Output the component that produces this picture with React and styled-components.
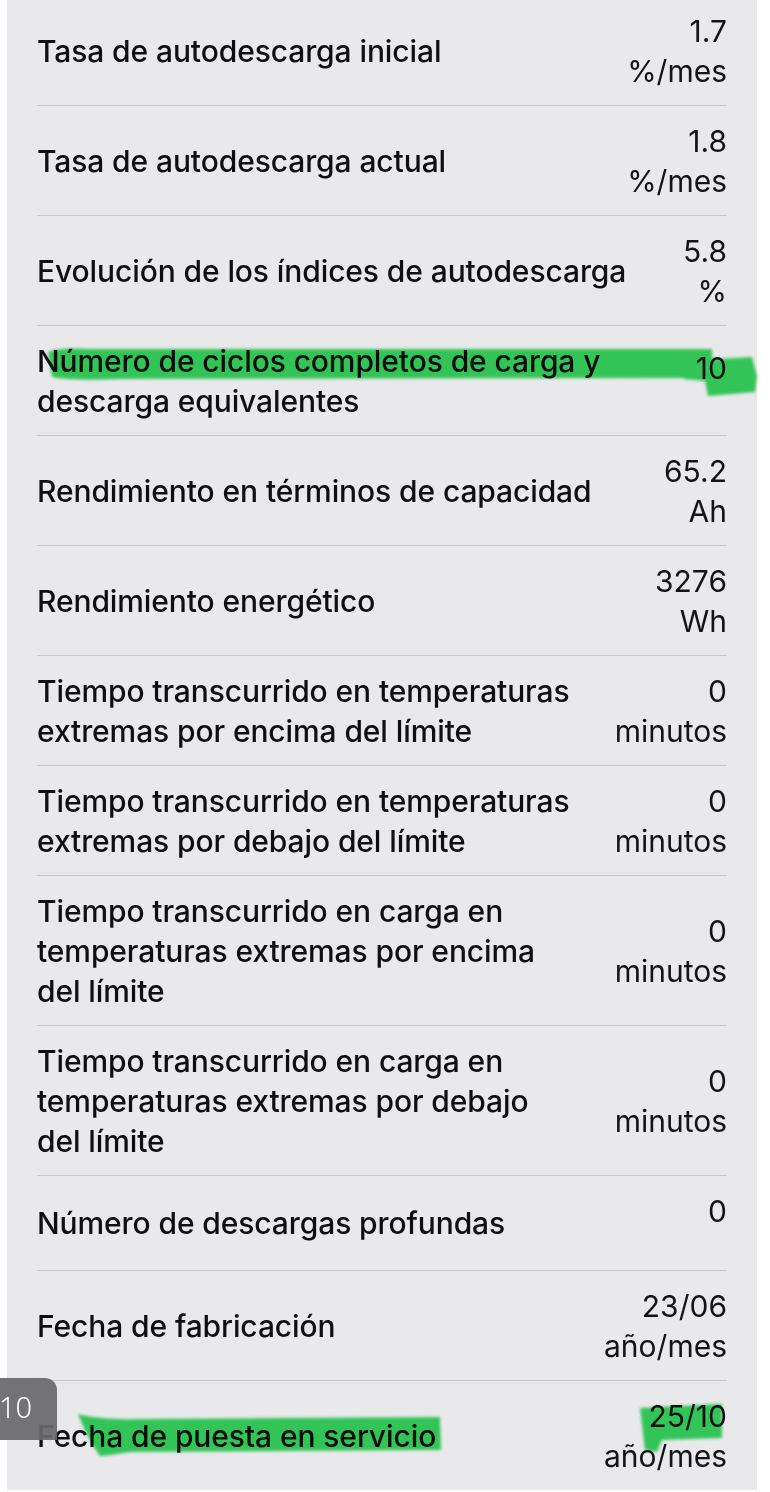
import React from "react"
import styled, { createGlobalStyle } from "styled-components"

const Global = createGlobalStyle`
  html, body {
    margin: 0;
    padding: 0;
    background: #ffffff;
    overflow: hidden;
  }
  body {
    font-family: Inter, "Liberation Sans", sans-serif;
    -webkit-font-smoothing: antialiased;
  }
`

const Page = styled.div`
  position: relative;
  width: 770px;
  height: 1492px;
  overflow: hidden;
  background: #ffffff;
`

const Panel = styled.div`
  margin-left: 7px;
  width: 750px;
  min-height: 1492px;
  background: #e9e9eb;
  padding: 0 30px;
  box-sizing: border-box;
`

const List = styled.ul`
  list-style: none;
  margin: -5px 0 0 0;
  padding: 0;
`

const Row = styled.li`
  display: flex;
  align-items: center;
  gap: 38px;
  padding: 14.5px 0;
  border-top: 1px solid #c7c7cb;
`

const Label = styled.div`
  flex: 1;
  font-size: 30px;
  line-height: 40px;
  font-weight: 500;
  color: #0f0f11;
  letter-spacing: -0.1px;
`

const Value = styled.div`
  display: flex;
  flex-direction: column;
  align-items: flex-end;
  text-align: right;
  font-size: 30px;
  line-height: 40px;
  font-weight: 400;
  color: #141416;
  white-space: nowrap;
`

const Unit = styled.span`
  min-height: 25px;
`

const Marks = styled.svg`
  position: absolute;
  left: 0;
  top: 0;
  width: 770px;
  height: 1492px;
  pointer-events: none;
  mix-blend-mode: multiply;
`

const Badge = styled.div`
  position: absolute;
  left: 0;
  top: 1378px;
  width: 57px;
  height: 62px;
  background: rgba(104, 104, 108, 0.92);
  border-radius: 0 12px 0 0;
  color: #ffffff;
  font-family: "Noto Sans", Inter, sans-serif;
  font-size: 29px;
  font-weight: 300;
  line-height: 1;
  padding: 14px 0 0 0;
  box-sizing: border-box;
  text-indent: -1px;
`

const rows = [
  { label: "Tasa de autodescarga inicial", value: "1.7", unit: "%/mes" },
  { label: "Tasa de autodescarga actual", value: "1.8", unit: "%/mes" },
  { label: "Evolución de los índices de autodescarga", value: "5.8", unit: "%" },
  { label: "Número de ciclos completos de carga y descarga equivalentes", value: "10" },
  { label: "Rendimiento en términos de capacidad", value: "65.2", unit: "Ah" },
  { label: "Rendimiento energético", value: "3276", unit: "Wh" },
  { label: "Tiempo transcurrido en temperaturas extremas por encima del límite", value: "0", unit: "minutos" },
  { label: "Tiempo transcurrido en temperaturas extremas por debajo del límite", value: "0", unit: "minutos" },
  { label: "Tiempo transcurrido en carga en temperaturas extremas por encima del límite", value: "0", unit: "minutos" },
  { label: "Tiempo transcurrido en carga en temperaturas extremas por debajo del límite", value: "0", unit: "minutos" },
  { label: "Número de descargas profundas", value: "0" },
  { label: "Fecha de fabricación", value: "23/06", unit: "año/mes" },
  { label: "Fecha de puesta en servicio", value: "25/10", unit: "año/mes" },
]

export default function App() {
  return (
    <Page>
      <Global />
      <Panel>
        <List>
          {rows.map((r, i) => (
            <Row key={i}>
              <Label>{r.label}</Label>
              <Value>
                <span>{r.value}</span>
                <Unit>{r.unit || ""}</Unit>
              </Value>
            </Row>
          ))}
        </List>
      </Panel>

      {/* highlighter marks drawn on the screenshot */}
      <Marks viewBox="0 0 770 1492">
        <defs>
          <filter id="soft" x="-5%" y="-50%" width="110%" height="200%">
            <feGaussianBlur stdDeviation="1.6" />
          </filter>
        </defs>
        <g fill="#38d75e" filter="url(#soft)">
          <path d="M48,352 Q60,347 90,349 L712,349 L713,378 L120,379 Q70,381 52,377 Z" />
          <path d="M683,361 L752,357 L757,376 L755,392 L708,396 L705,381 L684,379 Z" />
          <path d="M78,1414 Q100,1420 140,1419 L440,1417 L441,1450 L130,1452 Q104,1456 100,1456 Q88,1440 78,1414 Z" />
          <path d="M640,1408 L722,1404 L722,1438 L662,1440 L657,1452 L645,1450 Z" />
        </g>
      </Marks>

      <Badge>10</Badge>
    </Page>
  )
}
